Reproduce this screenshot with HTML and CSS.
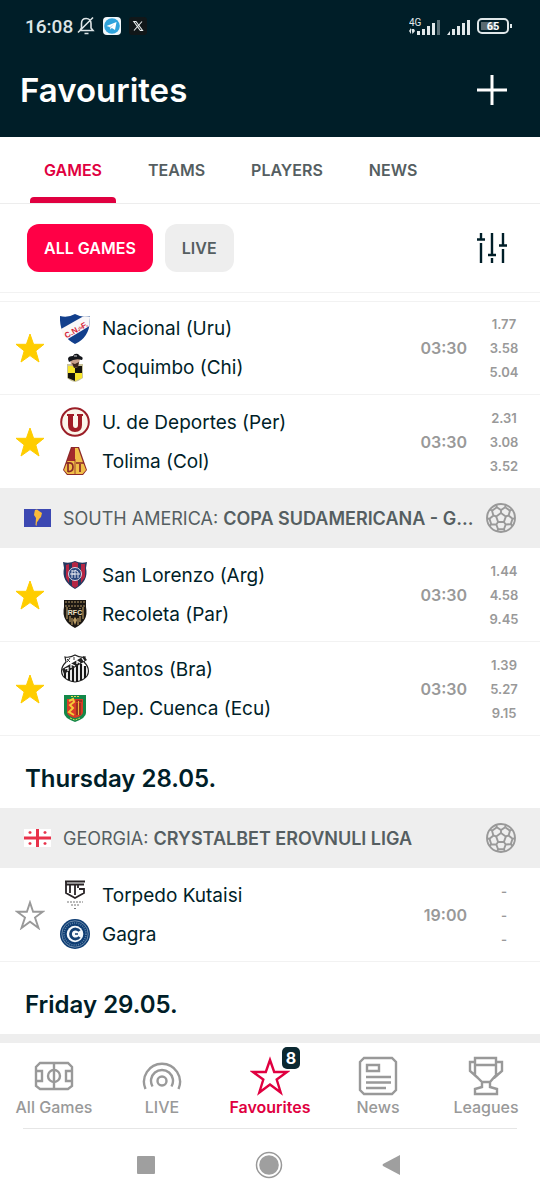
FILE: index.html
```
<!DOCTYPE html>
<html lang="en">
<head>
    <meta charset="UTF-8">
    <meta name="viewport" content="width=device-width, initial-scale=1.0">
    <title>Favourites</title>
    <link rel="stylesheet" href="styles.css">
</head>
<body>
    <!-- Shared icons -->
    <svg class="sprite" aria-hidden="true">
        <symbol id="star" viewBox="0 0 30 30">
            <path d="M15 1 18.600 11.300H29L20.800 17.900 24 29 15 22.600 6 29 9.200 17.900 1 11.300H11.400Z" stroke="currentColor" stroke-linejoin="round"/>
        </symbol>
        <symbol id="star-outline" viewBox="0 0 30 30">
            <path d="M15 2.500 18.100 11.800H27.800L20 17.500 23.500 28 15 21.700 6.500 28 10 17.500 2.200 11.800H11.900Z" fill="none" stroke="currentColor" stroke-width="1.900"/>
        </symbol>
        <symbol id="ball" viewBox="0 0 30 30">
            <g fill="none" stroke="currentColor" stroke-width="1.900">
                <circle cx="15" cy="15" r="14"/>
                <path d="M15 10 19.800 13.500 17.900 19H12.100L10.200 13.500Z"/>
                <path id="seam" d="M15 10V7M19.200 4.200 15 7 10.800 4.200 10.300 2M19.200 4.200 19.700 2M19.200 4.200 24 7.700"/>
                <use href="#seam" transform="rotate(72 15 15)"/>
                <use href="#seam" transform="rotate(144 15 15)"/>
                <use href="#seam" transform="rotate(216 15 15)"/>
                <use href="#seam" transform="rotate(288 15 15)"/>
            </g>
        </symbol>
    </svg>

    <div class="app">
        <header class="header">
            <div class="status-bar">
                <div class="status-left">
                    <span class="clock">16:08</span>
                    <svg width="18" height="20" viewBox="0 0 18 20" fill="none" stroke="#dce4e6" stroke-width="1.600">
                        <path d="M3 14.500H16L14 12V7.500C14 4.500 12 2.500 9.200 2.500S4.500 4.500 4.500 7.500V12L3 14.500M7.500 17.500H11.500M1 16.500 16 1.500"/>
                    </svg>
                    <svg class="telegram" width="18" height="18" viewBox="0 0 18 18">
                        <rect width="18" height="18" rx="4" fill="#f2f8fb"/>
                        <circle cx="9" cy="9" r="7.800" fill="#2fa3dc"/>
                        <path d="M3.500 9 13.500 5 12 13 8.800 10.900 7.300 12.400 6.800 9.900Z" fill="#fff"/>
                        <path d="M6.800 9.900 11.500 6.800 8 10.500 7.300 12.400Z" fill="#b9dcee"/>
                    </svg>
                    <svg width="18" height="18" viewBox="0 0 18 18">
                        <rect width="18" height="18" rx="3" fill="#111719"/>
                        <path d="M4.800 4.500H7L13.500 13.500H11.300ZM13 4.500 5 13.500" fill="none" stroke="#e8eced" stroke-width="1.100"/>
                    </svg>
                </div>
                <div class="status-right">
                    <svg width="32" height="20" viewBox="0 0 32 20" fill="#e1e8ea">
                        <text x="0" y="10" class="net">4G</text>
                        <path d="M0 15 2 12V18ZM2.500 13 5 13 6 15 3.500 18ZM8 17V15H11V19H8ZM13 13H16V19H13ZM18 10H21V19H18ZM23 7H26V19H23Z"/>
                        <path d="M28 4H31V19H28Z" opacity=".4"/>
                    </svg>
                    <svg width="24" height="20" viewBox="0 0 24 20" fill="#e1e8ea">
                        <path d="M0 19 3 15V19ZM5 13H8V19H5ZM10 10H13V19H10ZM15 7H18V19H15ZM20 4H23V19H20Z"/>
                    </svg>
                    <svg width="35" height="20" viewBox="0 0 35 20">
                        <rect x="1" y="3" width="30" height="14" rx="4" fill="none" stroke="#dfe7e9" stroke-width="2"/>
                        <rect x="4" y="6" width="15" height="8" fill="#5a6b71"/>
                        <path d="M33 8H35V12H33Z" fill="#dfe7e9"/>
                        <text x="16" y="14" text-anchor="middle" class="charge">65</text>
                    </svg>
                </div>
            </div>
            <div class="title-bar">
                <h1>Favourites</h1>
                <button class="icon-btn" aria-label="Add">
                    <svg width="30" height="30" viewBox="0 0 30 30" stroke="#fff" stroke-width="3"><path d="M15 0V30M0 15H30"/></svg>
                </button>
            </div>
        </header>

        <nav class="tabs">
            <a href="#games" class="tab active">GAMES</a>
            <a href="#teams" class="tab">TEAMS</a>
            <a href="#players" class="tab">PLAYERS</a>
            <a href="#news" class="tab">NEWS</a>
        </nav>

        <div class="filters">
            <button class="chip selected">ALL GAMES</button>
            <button class="chip">LIVE</button>
            <button class="icon-btn settings" aria-label="Filter">
                <svg width="30" height="30" viewBox="0 0 30 30" fill="none" stroke="#001e28" stroke-width="2.400">
                    <path d="M4 0V6M0 6.500H8M4 10V30M15 0V21M11 22H19M15 25V30M26 0V12M22 12.500H30M26 16V30"/>
                </svg>
            </button>
        </div>

        <main class="list">
            <section class="matches">
                <div class="match first">
                    <button class="fav on" aria-label="Remove from favourites"><svg><use href="#star"/></svg></button>
                    <div class="teams">
                        <div class="team">
                            <svg class="crest" viewBox="0 0 30 30">
                                <path d="M0 2Q8 4 15 0Q22 4 30 2Q31 23 15 30Q-1 22 0 2Z" fill="#123f8c"/>
                                <path d="M1 15 23 2.500 30 2.500 29.500 12 7 25.500 3 21Z" fill="#f9f7f8"/>
                                <g transform="rotate(-30 15 15)" class="crest-text" fill="#d61e38">
                                    <text x="3" y="19" font-size="8">C.N.</text>
                                    <text x="18" y="18" font-size="4">de</text>
                                    <text x="22" y="19" font-size="8">F.</text>
                                </g>
                            </svg>
                            <span>Nacional (Uru)</span>
                        </div>
                        <div class="team">
                            <svg class="crest" viewBox="0 0 30 30">
                                <path d="M7 11H23V25Q19 28 15 29Q10 28 7 25Z" fill="#c9c39b"/>
                                <path d="M8 13H15V20H8ZM15 20H22V25L15 28Z" fill="#f7e52b"/>
                                <path d="M15 13H22V20H15ZM8 20H15V28L8 25Z" fill="#15130d"/>
                                <path d="M10 6H20L18 14 15 15 11 12Z" fill="#caa08b"/>
                                <path d="M12 10 15 11 19 9 18 14 14 15Z" fill="#3b251c"/>
                                <path d="M8 6Q8 3 13 3Q14 0 18 1L20 3Q24 4 22 7Q15 5 9 9Z" fill="#15171c"/>
                                <path d="M14 3H17" stroke="#ddd"/>
                            </svg>
                            <span>Coquimbo (Chi)</span>
                        </div>
                    </div>
                    <time class="time">03:30</time>
                    <div class="odds"><span>1.77</span><span>3.58</span><span>5.04</span></div>
                </div>
                <div class="match">
                    <button class="fav on" aria-label="Remove from favourites"><svg><use href="#star"/></svg></button>
                    <div class="teams">
                        <div class="team">
                            <svg class="crest" viewBox="0 0 30 30">
                                <circle cx="15" cy="15" r="13.800" fill="#fbf6ea" stroke="#9b1e27" stroke-width="2"/>
                                <path d="M7 7H14V9H13V18Q13 21 15.500 21Q18 21 18 18V9H17V7H23V9H22V18Q22 25 15 25Q8 25 8 18V9H7Z" fill="#a11c25"/>
                            </svg>
                            <span>U. de Deportes (Per)</span>
                        </div>
                        <div class="team">
                            <svg class="crest" viewBox="0 0 30 30">
                                <path d="M11 1H19L27 24 23 29H7L3 24Z" fill="#8d2929"/>
                                <path d="M12 2H15V15H7.500ZM15 15H22.500L26 24 22.500 28H15Z" fill="#a32a2c"/>
                                <path d="M15 2H18L22.500 15H15ZM7.500 15H15V28H7.500L4 24ZM15 15H22.500L26 24 22.500 28H15Z" fill="#f0bf48"/>
                                <path d="M8 16V26M8 17Q13 16 13 21Q13 26 8 25.500M6 17H9M16 17H24M20 18V26" stroke="#8b2927" stroke-width="1.700" fill="none"/>
                                <path d="M15 13V28" stroke="#8b2927" stroke-width=".8"/>
                            </svg>
                            <span>Tolima (Col)</span>
                        </div>
                    </div>
                    <time class="time">03:30</time>
                    <div class="odds"><span>2.31</span><span>3.08</span><span>3.52</span></div>
                </div>
            </section>

            <a href="#copa" class="league">
                <svg class="flag" viewBox="0 0 27 18">
                    <path d="M0 0H27V18H0Z" fill="#3c48b2"/>
                    <path d="M11 1 13 .5 15 2 18 4 17 8 15 10 14 12 13 13 12.500 17 11.500 16 12 9 10 6 10.500 3Z" fill="#f9ba3c"/>
                </svg>
                <span class="league-name">SOUTH AMERICA: <strong>COPA SUDAMERICANA - G...</strong></span>
                <svg class="sport"><use href="#ball"/></svg>
            </a>
            <section class="matches">
                <div class="match">
                    <button class="fav on" aria-label="Remove from favourites"><svg><use href="#star"/></svg></button>
                    <div class="teams">
                        <div class="team">
                            <svg class="crest" viewBox="0 0 30 30">
                                <path d="M3 2Q9 4 15 1Q21 4 27 2L26 8Q29 21 15 29Q1 21 4 8Z" fill="#24375f"/>
                                <path d="M6 5V18L9 23V4ZM12 3V26L15 28 18 26V3L15 2ZM21 4V23L25 17V4Z" fill="#b52644"/>
                                <circle cx="15" cy="14" r="6.500" fill="#28457d" stroke="#d8dce8"/>
                                <path d="M12 10V18M12 11H15M12 14H15M15 18V10L18 12V18M10 14H20" stroke="#e7e9f0" fill="none"/>
                            </svg>
                            <span>San Lorenzo (Arg)</span>
                        </div>
                        <div class="team">
                            <svg class="crest" viewBox="0 0 30 30">
                                <path d="M4 1H26V8Q29 22 15 29Q1 22 4 8Z" fill="#1c1813"/>
                                <path d="M7 8V20M10 9V23M20 9V23M23 8V20M12 19V26M18 19V26" stroke="#a68a59" stroke-width="1.300"/>
                                <path d="M5 3H25M5 7H25" stroke="#b69b6a" stroke-dasharray="2 1"/>
                                <path d="M8 10H22V17H8Z" fill="#1c1813"/>
                                <text x="15" y="16" font-size="7" text-anchor="middle" class="crest-text" fill="#ede1c5">RFC</text>
                                <path d="M15 18 17 21 15 26 13 21Z" fill="#bd9e65"/>
                            </svg>
                            <span>Recoleta (Par)</span>
                        </div>
                    </div>
                    <time class="time">03:30</time>
                    <div class="odds"><span>1.44</span><span>4.58</span><span>9.45</span></div>
                </div>
                <div class="match">
                    <button class="fav on" aria-label="Remove from favourites"><svg><use href="#star"/></svg></button>
                    <div class="teams">
                        <div class="team">
                            <svg class="crest" viewBox="0 0 30 30">
                                <path d="M5 3Q10 4 15 1Q20 4 25 3L24 8Q31 15 27 22Q23 27 15 28Q7 27 3 22Q-1 15 6 8Z" fill="#fff" stroke="#222" stroke-width="1.200"/>
                                <path d="M5 17V24M9 15V26M13 13V28M17 11V28M21 10V26M25 12V24" stroke="#151515" stroke-width="2.200"/>
                                <path d="M2 15 24 2 27 6 4 20Z" fill="#222"/>
                                <path d="M5 15 8 14 8 17M11 14V10L15 12M17 10V7L20 9M22 4 24 7" stroke="#fff" fill="none" stroke-width="1.300"/>
                                <path d="M7 5 10 8M10 4 7 8M14 3V6" stroke="#333"/>
                            </svg>
                            <span>Santos (Bra)</span>
                        </div>
                        <div class="team">
                            <svg class="crest" viewBox="0 0 30 30">
                                <path d="M4 2H26V20Q26 25 15 29Q4 25 4 20Z" fill="#148849"/>
                                <path d="M7 6H23V19Q23 23 15 25Q7 23 7 19Z" fill="#d83b27"/>
                                <path d="M9 8 13 6 14 9 10 12 13 15 9 19 14 22" fill="none" stroke="#f4cb38" stroke-width="2"/>
                                <path d="M17 10V22M20 10V22M16 8H22" stroke="#87301f" stroke-width="1.500"/>
                                <path d="M18.500 8V22" stroke="#edb63a"/>
                                <path d="M11 3.500H19M10 25 15 27 20 25" stroke="#e5d94f" stroke-dasharray="2 1" fill="none"/>
                            </svg>
                            <span>Dep. Cuenca (Ecu)</span>
                        </div>
                    </div>
                    <time class="time">03:30</time>
                    <div class="odds"><span>1.39</span><span>5.27</span><span>9.15</span></div>
                </div>
            </section>

            <h2 class="day">Thursday 28.05.</h2>
            <a href="#georgia" class="league">
                <svg class="flag" viewBox="0 0 27 18">
                    <path d="M0 0H27V18H0Z" fill="#fff"/>
                    <path d="M13.500 0V18M0 9H27" stroke="#e8324a" stroke-width="3"/>
                    <path d="M6 2V5M4.500 3.500H7.500M21 2V5M19.500 3.500H22.500M6 13V16M4.500 14.500H7.500M21 13V16M19.500 14.500H22.500" stroke="#e8324a" stroke-width="1.300"/>
                </svg>
                <span class="league-name">GEORGIA: <strong>CRYSTALBET EROVNULI LIGA</strong></span>
                <svg class="sport"><use href="#ball"/></svg>
            </a>
            <section class="matches">
                <div class="match">
                    <button class="fav" aria-label="Add to favourites"><svg><use href="#star-outline"/></svg></button>
                    <div class="teams">
                        <div class="team">
                            <svg class="crest" viewBox="0 0 30 30">
                                <path d="M5 1.500H25M6 1V13L15 18 24 13V9H19M24 4.500H18V8M6 4.500H18M10 4V13M15 4V15" fill="none" stroke="#292426" stroke-width="1.800"/>
                                <path d="M7 22H23M11 25H19M14 28.500H17" stroke="#777" stroke-dasharray="2 1"/>
                            </svg>
                            <span>Torpedo Kutaisi</span>
                        </div>
                        <div class="team">
                            <svg class="crest" viewBox="0 0 30 30">
                                <circle cx="15" cy="15" r="15" fill="#0e3d73"/>
                                <circle cx="15" cy="15" r="13.200" fill="none" stroke="#a9bdd0" stroke-width=".6"/>
                                <circle cx="15" cy="15" r="11" fill="none" stroke="#5f83a8" stroke-width="1.600" stroke-dasharray="1 1.200"/>
                                <circle cx="15" cy="15" r="8.300" fill="#f5f9fc"/>
                                <path d="M19.500 12A5 5 0 1 0 19.500 18" fill="none" stroke="#123f72" stroke-width="2.800"/>
                                <path d="M15 15H18" stroke="#123f72" stroke-width="1.500"/>
                            </svg>
                            <span>Gagra</span>
                        </div>
                    </div>
                    <time class="time">19:00</time>
                    <div class="odds"><span>-</span><span>-</span><span>-</span></div>
                </div>
            </section>

            <h2 class="day">Friday 29.05.</h2>
            <div class="league"></div>
        </main>

        <nav class="bottom-nav">
            <a href="#all" class="nav-item">
                <svg viewBox="0 0 40 40" class="nav-icon">
                    <path d="M6 7H34L38 11V30L34 33H6L2 30V11ZM20 7V33M2 15H8V25H2M38 15H32V25H38"/>
                    <circle cx="20" cy="20" r="6"/>
                </svg>
                <span>All Games</span>
            </a>
            <a href="#live" class="nav-item">
                <svg viewBox="0 0 40 40" class="nav-icon">
                    <circle cx="20" cy="25" r="4.500"/>
                    <path d="M3.500 33A18 18 0 1 1 36.500 33M10.500 30.500A11 11 0 1 1 29.500 30.500"/>
                </svg>
                <span>LIVE</span>
            </a>
            <a href="#favourites" class="nav-item current">
                <span class="badge-wrap">
                    <svg viewBox="0 0 40 40" class="nav-icon">
                        <path d="M20 4 24.200 16H37L26.700 23.500 30.700 36.500 20 28.500 9.300 36.500 13.300 23.500 3 16H15.800Z"/>
                    </svg>
                    <span class="badge">8</span>
                </span>
                <span>Favourites</span>
            </a>
            <a href="#news" class="nav-item">
                <svg viewBox="0 0 40 40" class="nav-icon">
                    <path d="M6 2H34L38 6V34L34 38H6L2 34V6ZM9 9H21V15H9ZM8 21H33M8 26.500H33M8 32H28"/>
                </svg>
                <span>News</span>
            </a>
            <a href="#leagues" class="nav-item">
                <svg viewBox="0 0 40 40" class="nav-icon">
                    <path d="M9 2H30V19L24 26H16L9 19ZM9 9H30M9 6H4V15L12 22M30 6H36V15L28 22M16 26V31L9 33V38H31V33L24 31V26"/>
                </svg>
                <span>Leagues</span>
            </a>
        </nav>

        <div class="system-nav">
            <button aria-label="Recent apps"><svg width="18" height="18" viewBox="0 0 18 18"><rect width="18" height="18" rx="1" fill="#9f9f9f"/></svg></button>
            <button aria-label="Home"><svg width="28" height="28" viewBox="0 0 28 28"><circle cx="14" cy="14" r="12.500" fill="none" stroke="#999" stroke-width="1.500"/><circle cx="14" cy="14" r="9.800" fill="#9f9f9f"/></svg></button>
            <button aria-label="Back"><svg width="18" height="20" viewBox="0 0 18 20"><path d="M18 0V20L1 11Q0 10 1 9Z" fill="#9f9f9f"/></svg></button>
        </div>
    </div>
</body>
</html>
```
FILE: styles.css
```
* {
    box-sizing: border-box;
}
body {
    font-family: Inter, "Liberation Sans", sans-serif;
    background-color: #fff;
    color: #001e28;
    margin: 0;
}
a {
    color: inherit;
    text-decoration: none;
}
button {
    font-family: inherit;
    background: none;
    border: none;
    padding: 0;
    cursor: pointer;
}
svg {
    display: block;
    flex-shrink: 0;
}
.sprite {
    display: none;
}
.app {
    display: flex;
    flex-direction: column;
    height: 100vh;
    overflow: hidden;
}
.app > * {
    flex-shrink: 0;
}

/* Header */
.header {
    background-color: #001e28;
    color: #fff;
    padding-bottom: 16px;
}
.status-bar {
    display: flex;
    justify-content: space-between;
    align-items: center;
    height: 58px;
    padding: 0 28px 6px 25px;
}
.status-left,
.status-right {
    display: flex;
    align-items: center;
    gap: 8px;
}
.status-right {
    gap: 6px;
}
.clock {
    font-family: Roboto, sans-serif;
    font-size: 19px;
    font-weight: 500;
    color: #dce4e6;
    margin-right: -4px;
}
.net {
    font: 10px Roboto, sans-serif;
}
.charge {
    font: bold 11px Roboto, sans-serif;
    fill: #fff;
}
.title-bar {
    display: flex;
    justify-content: space-between;
    align-items: center;
    height: 63px;
    padding: 0 33px 0 20px;
}
h1 {
    font-size: 33px;
    font-weight: 600;
    margin: 0;
}

/* Tabs and filters */
.tabs {
    display: flex;
    gap: 18px;
    height: 67px;
    padding-left: 30px;
    border-bottom: 1px solid #ededed;
}
.tab {
    padding: 22px 14px 0;
    font-size: 16px;
    line-height: 22px;
    font-weight: 600;
    color: #555e61;
    border-bottom: 6px solid transparent;
}
.tab.active {
    color: #e00040;
    position: relative;
}
.tab.active::after {
    content: "";
    position: absolute;
    left: 0;
    right: 0;
    bottom: -6px;
    height: 6px;
    border-radius: 4px 4px 0 0;
    background-color: #e00040;
}
.filters {
    display: flex;
    align-items: center;
    gap: 12px;
    height: 89px;
    padding: 0 33px 0 27px;
    border-bottom: 1px solid #f2f2f2;
}
.chip {
    height: 48px;
    padding: 0 17px;
    border-radius: 12px;
    background-color: #eee;
    color: #555e61;
    font-size: 16px;
    font-weight: 600;
}
.chip.selected {
    background-color: #ff0046;
    color: #fff;
}
.settings {
    margin-left: auto;
}

/* Match list */
.list {
    flex: 1 1 0;
    min-height: 0;
    overflow: hidden;
    padding-top: 8px;
}
.match {
    display: flex;
    align-items: center;
    height: 94px;
    padding: 0 22px 0 15px;
    border-bottom: 1px solid #f2f2f2;
}
.match.first {
    border-top: 1px solid #f2f2f2;
}
.fav {
    color: #999;
}
.fav.on {
    color: #ffcd00;
}
.fav svg {
    width: 30px;
    height: 30px;
    fill: currentColor;
}
.teams {
    flex: 1;
    min-width: 0;
    padding-left: 15px;
}
.team {
    display: flex;
    align-items: center;
    gap: 12px;
    height: 39px;
    font-size: 19px;
}
.crest {
    width: 30px;
    height: 30px;
}
.crest-text {
    font-family: "Liberation Sans", sans-serif;
    font-weight: bold;
}
.time {
    font-size: 16px;
    font-weight: 600;
    color: #999;
}
.odds {
    display: flex;
    flex-direction: column;
    align-items: center;
    width: 51px;
    padding-left: 23px;
    font-size: 13px;
    line-height: 24px;
    font-weight: 600;
    color: #999;
}
.league {
    display: flex;
    align-items: center;
    gap: 12px;
    height: 60px;
    padding: 0 24px;
    background-color: #eee;
    color: #555e61;
    font-size: 18px;
}
.matches + .league {
    margin-top: -1px;
}
.league-name {
    flex: 1;
    min-width: 0;
    white-space: nowrap;
}
.league-name strong {
    font-weight: 600;
}
.flag {
    width: 27px;
    height: 18px;
}
.sport {
    width: 30px;
    height: 30px;
    color: #999;
}
.day {
    margin: 0;
    padding: 14px 25px 0;
    font-size: 24px;
    line-height: 58px;
    font-weight: 600;
}

/* Bottom navigation */
.bottom-nav {
    display: flex;
    height: 85px;
    padding-top: 13px;
    background-color: #fff;
}
.nav-item {
    flex: 1;
    display: flex;
    flex-direction: column;
    align-items: center;
    font-size: 16px;
    line-height: 22px;
    font-weight: 500;
    color: #999;
}
.nav-item.current {
    color: #e00040;
    font-weight: 600;
}
.nav-icon {
    width: 40px;
    height: 40px;
    fill: none;
    stroke: currentColor;
    stroke-width: 2.400;
}
.badge-wrap {
    position: relative;
}
.badge {
    position: absolute;
    top: -9px;
    right: -10px;
    width: 18px;
    border-radius: 5px;
    background-color: #0b2831;
    color: #fff;
    text-align: center;
    font-weight: 700;
}
.system-nav {
    display: flex;
    justify-content: space-between;
    align-items: center;
    height: 72px;
    margin: 0 23px;
    padding: 0 117px 0 114px;
    border-top: 1px solid #e6e6e6;
}
```
